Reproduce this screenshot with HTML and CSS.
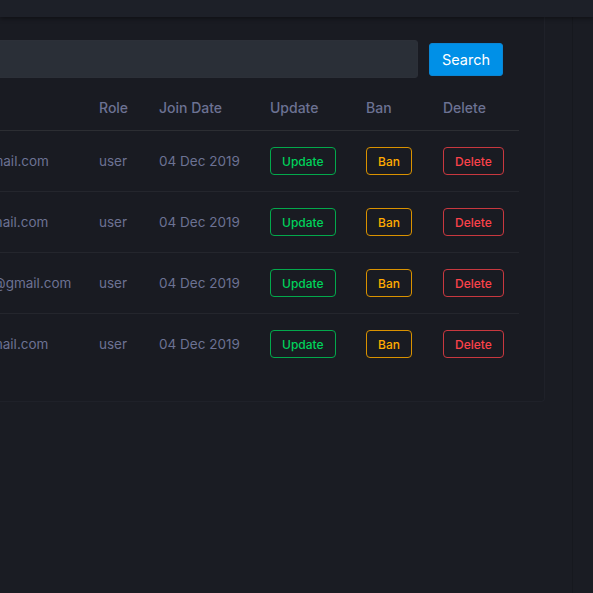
FILE: index.html
```html
<!DOCTYPE html>
<html>
<head>
<meta charset="utf-8">
<link rel="stylesheet" href="styles.css">
</head>
<body>
<div class="topbar"></div>
<div class="main">
  <div class="content">
    <div class="card">
      <form class="search-row">
        <input class="search-input" type="text" value="">
        <button class="btn-search" type="button">Search</button>
      </form>
      <table class="users">
        <colgroup>
          <col class="c-name"><col class="c-email"><col class="c-role"><col class="c-date"><col class="c-upd"><col class="c-ban"><col class="c-del">
        </colgroup>
        <thead>
          <tr><th>Name</th><th>Email</th><th>Role</th><th>Join Date</th><th>Update</th><th>Ban</th><th>Delete</th></tr>
        </thead>
        <tbody>
          <tr><td>John Roe</td><td>johnroe@gmail.com</td><td>user</td><td>04 Dec 2019</td><td><button class="btn btn-success">Update</button></td><td><button class="btn btn-warning">Ban</button></td><td><button class="btn btn-danger">Delete</button></td></tr>
          <tr><td>Jane Roe</td><td>janeroe@gmail.com</td><td>user</td><td>04 Dec 2019</td><td><button class="btn btn-success">Update</button></td><td><button class="btn btn-warning">Ban</button></td><td><button class="btn btn-danger">Delete</button></td></tr>
          <tr><td>Mark Smith</td><td>mark.smith@gmail.com</td><td>user</td><td>04 Dec 2019</td><td><button class="btn btn-success">Update</button></td><td><button class="btn btn-warning">Ban</button></td><td><button class="btn btn-danger">Delete</button></td></tr>
          <tr><td>Ann Lee</td><td>annleer@gmail.com</td><td>user</td><td>04 Dec 2019</td><td><button class="btn btn-success">Update</button></td><td><button class="btn btn-warning">Ban</button></td><td><button class="btn btn-danger">Delete</button></td></tr>
        </tbody>
      </table>
    </div>
  </div>
  <div class="strip"></div>
</div>
</body>
</html>
```
FILE: styles.css
```css
html, body {
  margin: 0;
  padding: 0;
  background: #1a1c23;
  overflow: hidden;
  width: 593px;
  height: 593px;
  font-family: Inter, "Noto Sans", sans-serif;
}

.topbar {
  height: 17px;
  background: #1d2028;
  box-shadow: 0 2px 4px rgba(0, 0, 0, 0.35);
  position: relative;
  z-index: 2;
}

.main {
  display: flex;
  height: 576px;
}

.content {
  width: 573px;
  flex: none;
  border-right: 1px solid #16181e;
  box-sizing: border-box;
}

.strip {
  flex: 1;
  background: #1a1c23;
}

.card {
  margin-left: -301px;
  margin-right: 27px;
  background: #191b22;
  border: 1px solid #1f2129;
  border-top: none;
  border-radius: 0 0 4px 4px;
  padding: 23px 25px 27px 25px;
}

.search-row {
  display: flex;
  gap: 11px;
  align-items: center;
  padding-right: 16px;
  margin: 0;
}

.search-input {
  flex: 1;
  height: 38px;
  box-sizing: border-box;
  background: #2a2f37;
  border: 1px solid #2c3038;
  border-radius: 3px;
  outline: none;
}

.btn-search {
  width: 74px;
  height: 33px;
  background: #0090e7;
  color: #ffffff;
  border: 1px solid #0a86d4;
  border-radius: 3px;
  font-family: Inter, sans-serif;
  font-size: 14.5px;
  font-weight: 400;
  padding: 0;
}

.users {
  width: 794px;
  table-layout: fixed;
  border-collapse: collapse;
  color: #6c7293;
  font-size: 13.5px;
}

.c-name { width: 182px; }
.c-email { width: 177px; }
.c-role { width: 60px; }
.c-date { width: 111px; }
.c-upd { width: 96px; }
.c-ban { width: 77px; }
.c-del { width: 91px; }

.users th {
  text-align: left;
  font-weight: 500;
  font-size: 14px;
  line-height: 18px;
  padding: 21px 15px 13px 15px;
  border-bottom: 1px solid #2c2e33;
  white-space: nowrap;
}

.users td {
  padding: 16px 15px 16px 15px;
  line-height: 28px;
  height: 28px;
  border-bottom: 1px solid #24262d;
  white-space: nowrap;
  vertical-align: middle;
}

.users tbody tr:last-child td {
  border-bottom: none;
}

.btn {
  display: block;
  height: 28px;
  box-sizing: border-box;
  background: transparent;
  border: 1px solid;
  border-radius: 4px;
  padding: 0 11px;
  font-family: Inter, sans-serif;
  font-size: 12px;
  font-weight: 500;
}

.btn-success { color: #00d25b; border-color: #03a94c; }
.btn-warning { color: #ffab00; border-color: #d99200; }
.btn-danger { color: #fc424a; border-color: #c8383f; }
```
